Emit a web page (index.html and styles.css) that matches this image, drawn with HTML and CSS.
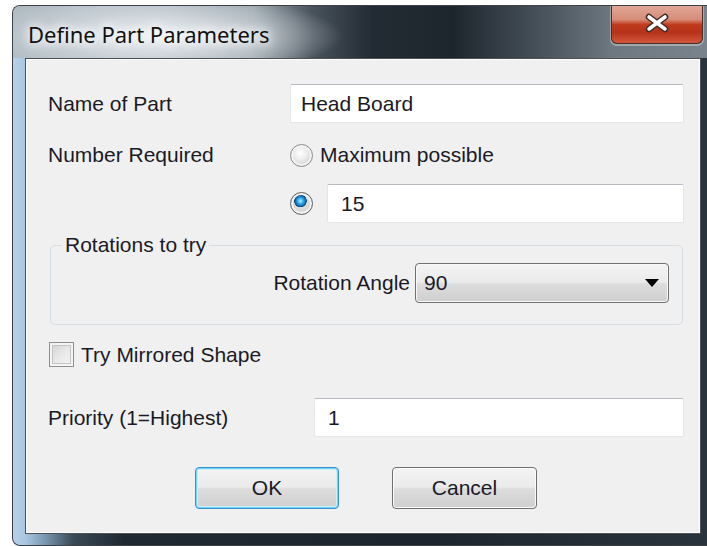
FILE: index.html
```html
<!DOCTYPE html>
<html lang="en">
<head>
<meta charset="utf-8">
<title>Define Part Parameters</title>
<link rel="stylesheet" href="styles.css">
</head>
<body>
<div class="window">
  <div class="titlebar">
    <span class="title">Define Part Parameters</span>
    <button class="close" aria-label="Close">
      <svg width="28" height="20" viewBox="0 0 28 20">
        <path d="M6 4 L22 16 M22 4 L6 16" stroke="#3a2a28" stroke-width="6.5" stroke-linecap="round" fill="none"/>
        <path d="M6 4 L22 16 M22 4 L6 16" stroke="#ffffff" stroke-width="3.6" stroke-linecap="round" fill="none"/>
      </svg>
    </button>
  </div>
  <div class="client">
    <div class="form-grid">
      <span class="lbl">Name of Part</span>
      <div class="field">Head Board</div>
      <span class="lbl">Number Required</span>
      <div class="radio-row"><span class="radio"></span><span>Maximum possible</span></div>
      <span></span>
      <div class="radio-row wide"><span class="radio checked"></span><div class="field count">15</div></div>
    </div>
    <fieldset class="group">
      <legend>Rotations to try</legend>
      <div class="angle-row">
        <span>Rotation Angle</span>
        <div class="combo"><span>90</span><span class="arrow"></span></div>
      </div>
    </fieldset>
    <div class="check-row"><span class="checkbox"></span><span>Try Mirrored Shape</span></div>
    <div class="priority-row">
      <span class="lbl">Priority (1=Highest)</span>
      <div class="field count">1</div>
    </div>
    <div class="buttons">
      <button class="btn default">OK</button>
      <button class="btn cancel">Cancel</button>
    </div>
  </div>
</div>
</body>
</html>
```
FILE: styles.css
```css
html, body {
  margin: 0;
  padding: 0;
  overflow: hidden;
  background: #ffffff;
}

body {
  font-family: "Liberation Sans", Arial, sans-serif;
  font-size: 21px;
  color: #1a1a26;
}

/* Aero-style window frame */
.window {
  box-sizing: border-box;
  margin: 5px 0 0 12px;
  width: 695px;
  height: 541px;
  border: 1px solid #3a4147;
  border-right: 0;
  border-radius: 8px 0 0 8px;
  display: flex;
  flex-direction: column;
  overflow: hidden;
  background: linear-gradient(to right, #b9d0e6 0px, #a9c6e3 12px, #7f9cb6 30px, #3a4956 60px, #1f2932 110px, #1c252d 60%, #2a343d 100%);
}

.titlebar {
  height: 52px;
  display: flex;
  justify-content: space-between;
  align-items: flex-start;
  padding-left: 15px;
  background:
    radial-gradient(ellipse 185px 42px at 145px 30px, rgba(238, 242, 245, 0.95), rgba(214, 221, 226, 0.55) 60%, rgba(214, 221, 226, 0) 100%),
    linear-gradient(to right, #aeb9c1 0px, #b8c1c8 140px, #98a3ab 240px, #48525b 300px, #222b33 360px, #1e262d 440px, #48535c 530px, #6d7881 600px, #78838c 695px);
}

.title {
  margin-top: 16px;
  font-family: "Noto Sans", "Liberation Sans", sans-serif;
  font-size: 22px;
  line-height: 24px;
  color: #111;
  text-shadow: 0 0 8px #fff, 0 0 12px #fff, 0 0 16px rgba(255, 255, 255, 0.8);
}

.close {
  margin: -1px 4px 0 0;
  width: 92px;
  height: 39px;
  padding: 0;
  border: 1px solid #4b2c26;
  border-top: 0;
  border-radius: 0 0 6px 6px;
  display: flex;
  align-items: center;
  justify-content: center;
  box-shadow: 0 1px 0 1px rgba(255, 255, 255, 0.35);
  background: linear-gradient(to bottom, #e2a898 0%, #d68c78 38%, #c0391c 52%, #b5321a 72%, #d3573c 100%);
}

.close svg {
  margin-top: -2px;
}

/* Dialog client area */
.client {
  flex: 1;
  margin: 0 6px 11px 12px;
  border: 1px solid #4a5157;
  box-shadow: inset 1px 1px 0 #ffffff, inset -1px -1px 0 #ffffff;
  background: #f0f0f0;
  padding: 25px 16px 0 22px;
  display: flex;
  flex-direction: column;
}

.form-grid {
  display: grid;
  grid-template-columns: 242px 1fr;
  grid-template-rows: 39px 61px 39px;
  align-items: center;
}

.lbl {
  white-space: nowrap;
}

.form-grid > .lbl:nth-of-type(2),
.form-grid > .radio-row:nth-of-type(2) {
  padding-top: 3px;
}

.field {
  box-sizing: border-box;
  height: 39px;
  background: #ffffff;
  border: 1px solid #e2e6ea;
  border-top-color: #b6b9bf;
  border-radius: 2px;
  padding-left: 10px;
  display: flex;
  align-items: center;
}

.field.count {
  flex: 1;
  padding-left: 13px;
}

.radio-row {
  display: flex;
  align-items: center;
  gap: 7px;
}

.radio-row.wide {
  gap: 14px;
}

.radio {
  box-sizing: border-box;
  width: 23px;
  height: 23px;
  border-radius: 50%;
  border: 1px solid #8e8f8f;
  background: radial-gradient(circle at 45% 40%, #ffffff 0%, #eeeeee 35%, #d2d2d2 70%, #bdbdbd 100%);
  box-shadow: inset 0 0 0 2px #f4f4f4;
  flex: none;
}

.radio.checked {
  border-color: #5e6163;
  background:
    radial-gradient(circle at 45% 38%, #b9f0ff 0%, #3fb5ee 2.5px, #0d6fb3 5px, #083f73 6px, rgba(8, 63, 115, 0) 6.5px),
    radial-gradient(circle, #e6e6e6 0%, #d0d0d0 70%, #a9a9a9 100%);
}

/* Rotations group */
.group {
  margin: 10px 1px 0 2px;
  padding: 6px 13px 21px 11px;
  border: 1px solid #d6dde3;
  border-radius: 5px;
  min-width: 0;
}

.group legend {
  padding: 0 3px;
  line-height: 24px;
}

.angle-row {
  display: flex;
  justify-content: flex-end;
  align-items: center;
  gap: 5px;
}

.combo {
  box-sizing: border-box;
  width: 254px;
  height: 40px;
  border: 1px solid #707070;
  border-radius: 4px;
  box-shadow: inset 0 0 0 1px #f8f8f8;
  background: linear-gradient(to bottom, #f3f3f3 0%, #ebebeb 48%, #dddddd 52%, #cfcfcf 100%);
  display: flex;
  align-items: center;
  justify-content: space-between;
  padding: 0 9px 0 8px;
}

.arrow {
  width: 0;
  height: 0;
  border-left: 7.5px solid transparent;
  border-right: 7.5px solid transparent;
  border-top: 8px solid #000000;
}

.check-row {
  margin: 17px 0 0 1px;
  display: flex;
  align-items: center;
  gap: 7px;
}

.checkbox {
  box-sizing: border-box;
  width: 25px;
  height: 25px;
  border: 1px solid #8e8f8f;
  background: linear-gradient(135deg, #d0d0d0 0%, #e8e8e8 50%, #f6f6f6 100%);
  box-shadow: inset 0 0 0 2px #f4f4f4, inset 0 0 0 3px #c4c4c4;
}

.priority-row {
  margin-top: 31px;
  display: grid;
  grid-template-columns: 266px 1fr;
  align-items: center;
}

.buttons {
  margin-top: 30px;
  display: flex;
  justify-content: center;
  gap: 53px;
}

.btn {
  box-sizing: border-box;
  height: 42px;
  font: inherit;
  color: #1a1a26;
  border: 1px solid #707070;
  border-radius: 4px;
  box-shadow: inset 0 0 0 1px #fbfbfb;
  background: linear-gradient(to bottom, #f3f3f3 0%, #ebebeb 48%, #dddddd 52%, #cfcfcf 100%);
}

.btn.default {
  width: 144px;
  border-color: #3c8fd0;
  box-shadow: inset 0 0 0 1px #6ed6f7, inset 0 0 0 2px #c9eefc;
}

.btn.cancel {
  width: 145px;
}
```
